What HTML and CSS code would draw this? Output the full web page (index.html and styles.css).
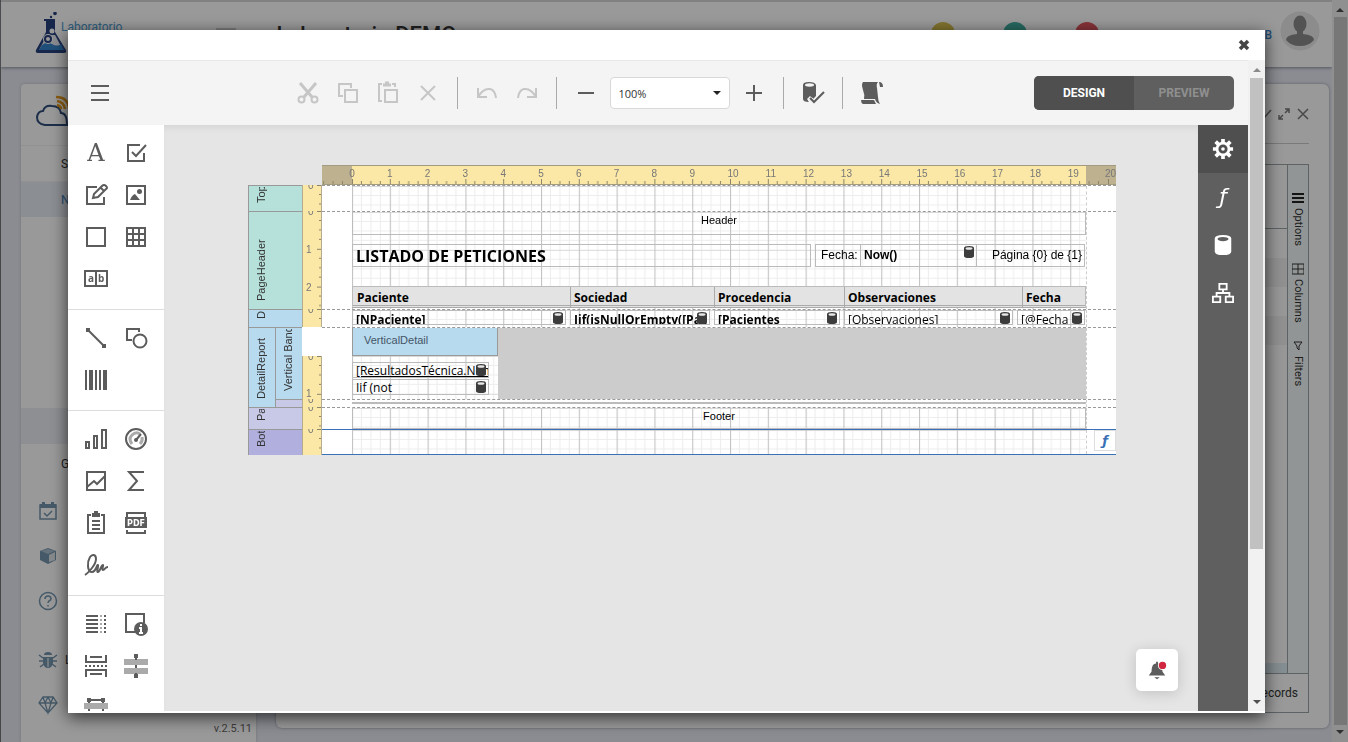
FILE: index.html
```html
<!DOCTYPE html>
<html lang="es">
<head>
<meta charset="utf-8">
<title>Laboratorio DEMO</title>
<link rel="stylesheet" href="styles.css">
</head>
<body>
<svg class="defs" aria-hidden="true">
  <defs>
    <pattern id="grid" width="378" height="378" patternUnits="userSpaceOnUse" patternTransform="scale(.1)">
      <path d="M94 0V378M189 0V378M283 0V378M0 94H378M0 189H378M0 283H378" stroke="#ededed" stroke-width="10"/>
      <path d="M0 5H378" stroke="#d8d8d8" stroke-width="10"/>
      <path d="M5 0V378" stroke="#c4c4c4" stroke-width="12"/>
    </pattern>
    <pattern id="hticks" width="378" height="200" patternUnits="userSpaceOnUse">
      <path d="M94 160V200M189 160V200M283 160V200M5 140V200" stroke="#8c8468" stroke-width="10"/>
    </pattern>
    <pattern id="vticks" width="20" height="378" patternUnits="userSpaceOnUse" patternTransform="scale(1 .1)">
      <path d="M16 94H20M16 189H20M16 283H20M14 5H20" stroke="#8c8468" stroke-width="10"/>
    </pattern>
    <symbol id="db" viewBox="0 0 12 14"><path d="M1 3Q1 1 6 1T11 3V11Q11 13 6 13T1 11Z" fill="#3c3c3c"/><ellipse cx="6" cy="3.500" rx="3.500" ry="1.300" fill="#e8e8e8"/></symbol>
    <symbol id="up" viewBox="0 0 8 4"><path d="M0 4L4 0L8 4Z"/></symbol>
    <symbol id="down" viewBox="0 0 8 4"><path d="M0 0L4 4L8 0Z"/></symbol>
  </defs>
</svg>

<div class="page">
  <div class="site">
    <header class="site-header">
      <svg class="logo" viewBox="0 0 34 44" aria-hidden="true">
        <path d="M12 8H21V20L32 38Q33 41 30 41H4Q1 41 2 38L12 20Z" fill="#27417f"/>
        <path d="M13 23L5 38H29L21 23Z" fill="#e6e9f2"/>
        <path d="M8 33Q13 29 18 32T27 32L30 38H5Z" fill="#3584c8"/>
        <circle cx="14" cy="27" r="5" fill="#fff"/><circle cx="14" cy="27" r="3" fill="none" stroke="#27417f" stroke-width="2"/>
        <circle cx="18" cy="19" r="2.500" fill="#fff"/><circle cx="21" cy="1.500" r="1.800" fill="#27417f"/><circle cx="17" cy="5" r="1.200" fill="#27417f"/>
        <path d="M10 8H21" stroke="#27417f" stroke-width="2"/>
      </svg>
      <span class="brand">Laboratorio</span>
      <span class="burger-bg"></span>
      <span class="site-title">Laboratorio DEMO</span>
      <span class="dots"><i class="dot-y"></i><i class="dot-g"></i><i class="dot-r"></i></span>
      <span class="user">LAB</span>
      <svg class="avatar" viewBox="0 0 40 40" aria-hidden="true"><circle cx="20" cy="20" r="19.500" fill="#e9e9e9"/><ellipse cx="20" cy="13" rx="6.500" ry="8.500" fill="#8b8b8b"/><path d="M17 18H23V23Q34 24 34 29Q29 35 20 35T6 29Q6 24 17 23Z" fill="#8b8b8b"/></svg>
    </header>
    <div class="site-body">
      <aside class="side">
        <svg class="cloud" viewBox="0 0 40 36" aria-hidden="true"><path d="M10 30Q2 29 2 22Q3 16 8 16Q10 10 17 11Q25 11 26 18Q32 18 32 30Z" fill="none" stroke="#2f4d7c" stroke-width="2"/><path d="M21 2Q33 2 34 14M22 6Q29 7 30 14M22 10Q26 11 26 14" fill="none" stroke="#e79a1c" stroke-width="2.500"/></svg>
        <a class="side-link" href="#s">Sistema</a>
        <a class="side-link active" href="#n">Nuevo</a>
        <span class="side-band"></span>
        <span class="side-head">Gestión</span>
        <a class="side-item" href="#cal" aria-label="Agenda"><svg viewBox="0 0 20 20"><path d="M2 4H18V18H2Z" fill="none" stroke="#7495ad" stroke-width="1.500"/><path d="M2 3H18V7H2ZM4 1H7V4H4ZM13 1H16V4H13Z" fill="#7495ad"/><path d="M6 12L9 15L14 10" fill="none" stroke="#7495ad" stroke-width="1.500"/></svg></a>
        <a class="side-item" href="#box" aria-label="Almacén"><svg viewBox="0 0 20 20"><path d="M2 5L10 2L18 5V14L10 18L2 14Z" fill="#7495ad"/><path d="M3 5L10 3L17 5L10 8Z" fill="#a9bfce"/><path d="M11 9L17 6V14L11 16Z" fill="#e0e6ea"/></svg></a>
        <a class="side-item" href="#help" aria-label="Ayuda"><svg viewBox="0 0 20 20"><circle cx="10" cy="10" r="8.500" fill="none" stroke="#7495ad" stroke-width="1.500"/><path d="M7 8Q7 5 10 5T13 8Q13 9 11 10Q10 11 10 12M10 14V15.500" fill="none" stroke="#7495ad" stroke-width="1.500"/></svg></a>
        <a class="side-item bug" href="#bug"><svg viewBox="0 0 20 20" aria-hidden="true"><path d="M6 5Q6 2 10 2T14 5ZM5 7H15V13Q14 18 10 18T5 13Z" fill="#7495ad"/><path d="M1 5L5 8M19 5L15 8M1 11H19M2 17L6 14M18 17L14 14" stroke="#7495ad" stroke-width="1.500"/><path d="M10 8V17" stroke="#fff"/></svg><span>Log</span></a>
        <a class="side-item" href="#gem" aria-label="Novedades"><svg viewBox="0 0 20 20"><path d="M5 2H15L19 8L10 18L1 8ZM1 8H19M5 2L7 8L10 18L13 8L15 2M7 8L10 2L13 8" fill="none" stroke="#7495ad" stroke-width="1.300"/></svg></a>
        <span class="version">v.2.5.11</span>
      </aside>
      <main class="panel">
        <div class="panel-tools"><svg viewBox="0 0 50 14" aria-hidden="true"><path d="M2 8L5 11L12 3M26 6L30 2M20 12L24 8M26 2H30V6M20 8V12H24M39 2L49 12M49 2L39 12" fill="none" stroke="#777" stroke-width="1.500"/></svg></div>
        <div class="grid-box">
          <div class="grid-main"><div class="grid-head"></div><div class="grid-row"></div><div class="grid-row alt"></div><div class="grid-row"></div><div class="grid-row alt"></div><div class="grid-total"></div></div>
          <div class="grid-tabs">
            <span><svg viewBox="0 0 12 12" aria-hidden="true"><path d="M0 2H12M0 6H12M0 10H12" stroke="#222" stroke-width="2"/></svg>Options</span>
            <span><svg viewBox="0 0 12 12" aria-hidden="true"><path d="M0 1H12V11H0ZM6 1V11M0 6H12" fill="none" stroke="#333"/></svg>Columns</span>
            <span><svg viewBox="0 0 12 12" aria-hidden="true"><path d="M2 2H10L7 6V10L5 8V6Z" fill="none" stroke="#333"/></svg>Filters</span>
          </div>
        </div>
        <div class="grid-foot">0 records</div>
      </main>
    </div>
  </div>
  <div class="page-scroll"><svg><use href="#up"/></svg><div class="page-thumb"></div><svg><use href="#down"/></svg></div>
</div>
<div class="shade"></div>

<section class="modal" role="dialog" aria-label="Diseñador de informes">
  <div class="modal-head"><button class="close" aria-label="Cerrar"><svg viewBox="0 0 12 12"><path d="M2 2L10 10M10 2L2 10" stroke="#444" stroke-width="3.500"/></svg></button></div>
  <div class="modal-body">
    <div class="designer">
      <div class="toolbar">
        <button class="menu" aria-label="Menú"><svg viewBox="0 0 24 24"><path d="M3 5H21M3 12H21M3 19H21" stroke="#5c5c5c" stroke-width="2"/></svg></button>
        <div class="tools">
          <button class="tool off" aria-label="Cortar"><svg viewBox="0 0 24 24"><path d="M4 2L16 16M20 2L8 16" stroke-width="3"/><circle cx="5.500" cy="18.500" r="3"/><circle cx="18.500" cy="18.500" r="3"/></svg></button>
          <button class="tool off" aria-label="Copiar"><svg viewBox="0 0 24 24"><path d="M7 15H3V3H15V7M9 9H21V21H9Z"/></svg></button>
          <button class="tool off" aria-label="Pegar"><svg viewBox="0 0 24 24"><path d="M6 20H3V3H6M16 3H19V6M9 9H21V21H9Z"/><path d="M7 4H15M9 2H13" stroke-width="3"/></svg></button>
          <button class="tool off" aria-label="Eliminar"><svg viewBox="0 0 24 24"><path d="M5 5L19 19M19 5L5 19"/></svg></button>
          <i class="sep"></i>
          <button class="tool off" aria-label="Deshacer"><svg viewBox="0 0 24 24"><path d="M3 7V16H12M3 16Q8 7 15 8Q20 9 21 17"/></svg></button>
          <button class="tool off" aria-label="Rehacer"><svg viewBox="0 0 24 24"><path d="M21 7V16H12M21 16Q16 7 9 8Q4 9 3 17"/></svg></button>
          <i class="sep"></i>
          <button class="tool" aria-label="Alejar"><svg viewBox="0 0 24 24"><path d="M4 12H20"/></svg></button>
          <label class="zoom"><select aria-label="Zoom"><option>100%</option></select><svg><use href="#down"/></svg></label>
          <button class="tool" aria-label="Acercar"><svg viewBox="0 0 24 24"><path d="M4 12H20M12 4V20"/></svg></button>
          <i class="sep"></i>
          <button class="tool" aria-label="Validar enlaces"><svg viewBox="0 0 24 24"><path d="M2 4Q2 1 8 1T15 4V15L12 18L9 15L6 18L8 21Q2 21 2 18Z" fill="#5c5c5c" stroke="none"/><ellipse cx="8.500" cy="4" rx="4.500" ry="1.700" fill="#f4f4f4" stroke="none"/><path d="M9 18L13 22L23 11" stroke="#f4f4f4" stroke-width="5"/><path d="M9 17L13 21L23 11"/></svg></button>
          <i class="sep"></i>
          <button class="tool" aria-label="Scripts"><svg viewBox="0 0 24 24"><path d="M3 1H18Q16 3 17 7L18 16Q18 20 20 23Q16 22 15 18H4Q5 14 3 9Q1 3 3 1ZM1 19H14L16 23H3Q1 22 1 19ZM19 1Q23 1 23 6H20Z" fill="#5c5c5c" stroke="none"/></svg></button>
        </div>
        <div class="toggle"><button class="on">DESIGN</button><button>PREVIEW</button></div>
      </div>
      <div class="work">
        <nav class="toolbox">
          <div class="group">
            <button aria-label="Etiqueta"><span class="letter">A</span></button>
            <button aria-label="Casilla"><svg viewBox="0 0 24 24"><path d="M16 4H4V20H20V12M8 11L12 15L22 4"/></svg></button>
            <button aria-label="Texto enriquecido"><svg viewBox="0 0 24 24"><path d="M13 4H3V21H20V14M9 15L10 11L18 3Q20 1 22 3T22 6L14 14ZM17 5L20 8"/></svg></button>
            <button aria-label="Imagen"><svg viewBox="0 0 24 24"><path d="M3 3H21V21H3Z"/><path d="M6 17Q8 12 11 11L16 17Z" fill="#5c5c5c" stroke="none"/><circle cx="15.500" cy="8.500" r="2.500" fill="#5c5c5c" stroke="none"/></svg></button>
            <button aria-label="Panel"><svg viewBox="0 0 24 24"><path d="M3 3H21V21H3Z"/></svg></button>
            <button aria-label="Tabla"><svg viewBox="0 0 24 24"><path d="M3 3H21V21H3ZM9 3V21M15 3V21M3 9H21M3 15H21"/></svg></button>
            <button aria-label="Peine de caracteres"><svg viewBox="0 0 24 24"><path d="M1 4H23V19H1ZM12 4V19"/><text x="4" y="15" class="glyph-ab">a</text><text x="14" y="15" class="glyph-ab">b</text></svg></button>
          </div>
          <div class="group">
            <button aria-label="Línea"><svg viewBox="0 0 24 24"><path d="M4 4L20 20"/><path d="M2 2H6V6H2ZM18 18H22V22H18Z" fill="#5c5c5c" stroke="none"/></svg></button>
            <button aria-label="Forma"><svg viewBox="0 0 24 24"><path d="M8 14H3V3H15V6"/><circle cx="16" cy="15" r="6.500"/></svg></button>
            <button aria-label="Código de barras"><svg viewBox="0 0 24 24"><path d="M2 2V22M12 2V22M16 2V22" stroke-width="2"/><path d="M7 2V22M21 2V22" stroke-width="4"/></svg></button>
          </div>
          <div class="group">
            <button aria-label="Gráfico"><svg viewBox="0 0 24 24"><path d="M2 15H5V21H2ZM10 9H13V21H10ZM18 3H22V21H18Z"/></svg></button>
            <button aria-label="Medidor"><svg viewBox="0 0 24 24"><circle cx="12" cy="12" r="10"/><path d="M8 17Q4 12 8 8T16 7M18 10Q19 14 16 17" stroke="#aaa" stroke-width="3"/><path d="M12 13L17 7" stroke-width="2"/><circle cx="12" cy="13" r="2" fill="#5c5c5c" stroke="none"/></svg></button>
            <button aria-label="Minigráfico"><svg viewBox="0 0 24 24"><path d="M3 3H21V21H3ZM3 18L10 12L13 15L21 7"/></svg></button>
            <button aria-label="Tabla dinámica"><svg viewBox="0 0 24 24"><path d="M20 3H5L13 12L5 21H20"/></svg></button>
            <button aria-label="Subinforme"><svg viewBox="0 0 24 24"><path d="M7 4H4V22H20V4H17M8 10H16M8 14H16M8 18H16"/><path d="M8 2H10V0H14V2H16V6H8Z" fill="#5c5c5c" stroke="none"/></svg></button>
            <button aria-label="PDF"><svg viewBox="0 0 24 24"><path d="M3 6V2H21V6M3 19V22H21V19"/><path d="M1 6H23V17H1Z" fill="#5c5c5c" stroke="none"/><text x="12" y="15" class="glyph-pdf">PDF</text></svg></button>
            <button aria-label="Firma"><svg viewBox="0 0 24 24"><path d="M1 22C4 20 12 12 12 6C12 1 8 1 6 4C3 9 3 19 8 19C12 19 13 11 14 12C15 13 12 19 14 19C16 19 17 12 19 12C20 13 17 16 19 17C21 17 21 14 24 14"/></svg></button>
          </div>
          <div class="group">
            <button aria-label="Tabla de contenido"><svg viewBox="0 0 24 24"><path d="M2 4H14M2 8H14M2 12H14M2 16H14M2 20H14"/><path d="M21 3V21" stroke-dasharray="2 2"/><path d="M17 3V21" stroke="#aaa" stroke-dasharray="2 2"/></svg></button>
            <button aria-label="Información de página"><svg viewBox="0 0 24 24"><path d="M11 20H2V2H20V11"/><circle cx="17" cy="17" r="7" fill="#5c5c5c" stroke="none"/><path d="M17 12V14M15 16H17V21M15 21H19" stroke="#fff"/></svg></button>
            <button aria-label="Salto de página"><svg viewBox="0 0 24 24"><path d="M2 1V8H22V1M6 3H18M2 23V16H22V23M6 20H18"/><path d="M1 12H23" stroke-dasharray="2 2"/></svg></button>
            <button aria-label="Línea entre bandas"><svg viewBox="0 0 24 24"><path d="M0 5H24V11H0ZM0 14H24V20H0Z" fill="#aaa" stroke="none"/><path d="M12 3V6M12 11V14M12 19V22"/><path d="M10 0H14V4H10ZM10 20H14V24H10Z" fill="#5c5c5c" stroke="none"/></svg></button>
            <button aria-label="Cuadro entre bandas"><svg viewBox="0 0 24 24"><path d="M5 4V23H19V4Z"/><path d="M0 7H24V13H0ZM0 15H24V21H0Z" fill="#aaa" stroke="none"/><path d="M3 2H7V6H3ZM17 2H21V6H17Z" fill="#5c5c5c" stroke="none"/></svg></button>
          </div>
        </nav>

        <div class="canvas">
          <div class="surface">
            <svg class="hruler" viewBox="-300 0 7940 200">
              <rect x="-300" width="7940" height="200" fill="#fbe8a7"/>
              <rect x="-300" width="300" height="200" fill="#bdb190"/><rect x="7340" width="300" height="200" fill="#bdb190"/>
              <rect x="-300" width="7940" height="200" fill="url(#hticks)"/>
              <path d="M-300 5H7640M-300 195H7640" stroke="#a39b80" stroke-width="10"/>
              <g class="hnum"><text x="0" y="120">0</text><text x="378" y="120">1</text><text x="756" y="120">2</text><text x="1134" y="120">3</text><text x="1512" y="120">4</text><text x="1890" y="120">5</text><text x="2268" y="120">6</text><text x="2646" y="120">7</text><text x="3024" y="120">8</text><text x="3402" y="120">9</text><text x="3810" y="120">10</text><text x="4188" y="120">11</text><text x="4566" y="120">12</text><text x="4944" y="120">13</text><text x="5322" y="120">14</text><text x="5700" y="120">15</text><text x="6078" y="120">16</text><text x="6456" y="120">17</text><text x="6834" y="120">18</text><text x="7212" y="120">19</text><text x="7585" y="120">20</text></g>
            </svg>

            <div class="band h-margin">
              <div class="tag teal"><span>TopMargin</span></div>
              <svg class="vruler"><rect width="20" height="100%" fill="url(#vticks)"/><text x="5" y="4">0</text></svg>
              <div class="sheet"><svg class="lines"><rect width="734" height="100%" fill="url(#grid)"/></svg></div>
            </div>

            <div class="band h-header">
              <div class="tag teal"><span>PageHeader</span></div>
              <svg class="vruler"><rect width="20" height="100%" fill="url(#vticks)"/><text x="5" y="4">0</text><text x="3" y="42">1</text><text x="3" y="80">2</text></svg>
              <div class="sheet"><svg class="lines"><rect width="734" height="100%" fill="url(#grid)"/></svg>
                <div class="item c-head">Header</div>
                <div class="item c-title">LISTADO DE PETICIONES</div>
                <div class="item c-fecha">Fecha:</div>
                <div class="item c-now">Now()<svg class="db"><use href="#db"/></svg></div>
                <div class="item c-pag">Página {0} de {1}</div>
                <div class="trow"><span>Paciente</span><span>Sociedad</span><span>Procedencia</span><span>Observaciones</span><span>Fecha</span></div>
              </div>
            </div>

            <div class="band h-detail">
              <div class="tag blue"><span>Detail</span></div>
              <svg class="vruler"><rect width="20" height="100%" fill="url(#vticks)"/><text x="5" y="4">0</text></svg>
              <div class="sheet"><svg class="lines"><rect width="734" height="100%" fill="url(#grid)"/></svg>
                <div class="drow">
                  <div class="cell strong">[NPaciente]<svg class="db"><use href="#db"/></svg></div>
                  <div class="cell strong">Iif(isNullOrEmpty([Pac<svg class="db"><use href="#db"/></svg></div>
                  <div class="cell strong">[Pacientes<svg class="db"><use href="#db"/></svg></div>
                  <div class="cell">[Observaciones]<svg class="db"><use href="#db"/></svg></div>
                  <div class="cell">[@Fecha<svg class="db"><use href="#db"/></svg></div>
                </div>
              </div>
            </div>

            <div class="nested">
              <div class="tag blue"><span>DetailReport</span></div>
              <div class="nest-rows">
                <div class="vband">
                  <div class="tag blue"><span>Vertical Bands</span></div>
                  <div class="vruler-gap"><svg class="vruler"><rect width="20" height="100%" fill="url(#vticks)"/><text x="5" y="4">0</text><text x="3" y="41">1</text></svg></div>
                  <div class="sheet vsheet">
                    <div class="vcol">
                      <div class="vtitle">VerticalDetail</div>
                      <div class="vbody"><svg class="lines vgrid"><rect width="146" height="100%" fill="url(#grid)"/></svg>
                        <div class="cell under">[ResultadosTécnica.Nom<svg class="db"><use href="#db"/></svg></div>
                        <div class="cell">Iif (not<svg class="db"><use href="#db"/></svg></div>
                      </div>
                    </div>
                    <div class="vrest"></div>
                  </div>
                </div>
                <div class="band h-sub">
                  <div class="tag lilac"></div>
                  <svg class="vruler"><text x="5" y="4">0</text></svg>
                  <div class="sheet"><div class="rule"></div></div>
                </div>
              </div>
            </div>

            <div class="band h-footer">
              <div class="tag lilac"><span>PageFooter</span></div>
              <svg class="vruler"><rect width="20" height="100%" fill="url(#vticks)"/><text x="5" y="4">0</text></svg>
              <div class="sheet"><svg class="lines"><rect width="734" height="100%" fill="url(#grid)"/></svg><div class="item c-foot">Footer</div></div>
            </div>

            <div class="band h-margin">
              <div class="tag violet"><span>BottomMargin</span></div>
              <svg class="vruler"><rect width="20" height="100%" fill="url(#vticks)"/><text x="5" y="4">0</text></svg>
              <div class="sheet picked"><svg class="lines"><rect width="734" height="100%" fill="url(#grid)"/></svg><button class="fx" aria-label="Expresión">ƒ</button></div>
            </div>
          </div>
          <button class="bell" aria-label="Avisos"><svg viewBox="0 0 24 24"><path d="M3 18L6 14Q6 5 11 5V3H13V5Q18 5 18 14L21 18ZM9 20H15L12 22Z" fill="#5c5c5c"/><circle cx="18" cy="7" r="5" fill="#fff"/><circle cx="18" cy="7" r="4" fill="#d0263f"/></svg></button>
        </div>

        <nav class="tabs">
          <button class="on" aria-label="Propiedades"><svg viewBox="0 0 24 24"><circle cx="12" cy="12" r="6.500" fill="none" stroke="#fff" stroke-width="3"/><circle cx="12" cy="12" r="2" fill="#fff"/><path d="M12 1V5M12 19V23M1 12H5M19 12H23M4 4L7 7M17 17L20 20M20 4L17 7M4 20L7 17" stroke="#fff" stroke-width="4"/></svg></button>
          <button aria-label="Expresiones"><span class="letter-f">ƒ</span></button>
          <button aria-label="Campos"><svg viewBox="0 0 24 24"><path d="M3 5Q3 1 12 1T21 5V19Q21 23 12 23T3 19Z" fill="#fff"/><ellipse cx="12" cy="5.500" rx="6" ry="2.300" fill="#5f5f5f"/></svg></button>
          <button aria-label="Explorador"><svg viewBox="0 0 24 24"><path d="M8 2H16V8H8ZM1 16H9V22H1ZM15 16H23V22H15ZM12 8V12M5 16V12H19V16" fill="none" stroke="#fff" stroke-width="2"/></svg></button>
        </nav>
      </div>
    </div>
    <div class="inner-scroll"><svg class="up"><use href="#up"/></svg><div class="inner-thumb"></div><svg><use href="#down"/></svg></div>
  </div>
</section>
</body>
</html>
```
FILE: styles.css
```css
* { box-sizing: border-box; }
body { margin: 0; height: 100vh; overflow: hidden; font-family: Roboto, "Liberation Sans", sans-serif; font-size: 12px; color: #333; }
button { border: 0; padding: 0; background: none; font: inherit; color: inherit; }
a { color: inherit; text-decoration: none; }
svg { display: block; }
.defs { position: absolute; width: 0; height: 0; }

/* Page behind the dialog */
.page { display: flex; height: 100vh; }
.site { flex: 1; display: flex; flex-direction: column; min-width: 0; background: #e6e9f2; border-left: 1px solid #777; }
.site-header { display: flex; align-items: flex-start; height: 67px; padding-left: 33px; background: #fff; border-top: 2px solid #d8d8d8; box-shadow: 0 1px 3px #8a8f9c; }
.logo { width: 34px; height: 44px; margin-top: 10px; }
.brand { margin: 18px 0 0 -7px; font-size: 12px; color: #4d9bd0; }
.burger-bg { width: 20px; height: 3px; margin: 26px 0 0 94px; background: #ccc; }
.site-title { margin: 20px 0 0 40px; font-size: 22px; font-weight: 500; color: #333; }
.dots { flex: 1; display: flex; justify-content: flex-end; gap: 48px; margin: 20px 151px 0 0; }
.dots i { width: 24px; height: 24px; border-radius: 50%; }
.dot-y { background: #d8c04e; }
.dot-g { background: #3fae9f; }
.dot-r { background: #e0565f; }
.user { margin: 26px 8px 0 0; font-size: 12px; font-weight: 500; color: #3a7fc4; }
.avatar { width: 40px; height: 40px; margin: 9px 12px 0 0; }
.site-body { flex: 1; display: flex; gap: 20px; padding: 17px 3px 0 20px; min-height: 0; }
.side { display: flex; flex-direction: column; width: 235px; background: #fff; border-radius: 4px 4px 0 0; box-shadow: 0 0 3px #b8bcc8; overflow: hidden; }
.cloud { width: 40px; height: 36px; margin: 11px 0 14px 14px; }
.side-link { height: 36px; padding-left: 40px; line-height: 36px; border-top: 1px solid #f2f2f2; }
.side-link.active { color: #3d7fc0; background: #e8edf4; }
.side-band { height: 36px; margin-top: 191px; background: #eceff5; }
.side-head { height: 44px; padding: 10px 0 0 40px; line-height: 20px; }
.side-item { display: flex; align-items: center; gap: 7px; height: 45px; padding-left: 17px; }
.side-item svg { width: 20px; height: 20px; }
.side-item.bug { margin-top: 14px; }
.version { margin: -8px 4px 0 0; text-align: right; line-height: 20px; color: #666; font-size: 11px; }
.panel { flex: 1; display: flex; flex-direction: column; margin-bottom: 14px; padding: 0 20px 15px; background: #fff; border-radius: 6px; box-shadow: 0 0 3px #9297a6; }
.panel-tools { display: flex; justify-content: flex-end; align-items: center; height: 60px; border-bottom: 1px solid #ccc; }
.panel-tools svg { width: 50px; height: 14px; }
.grid-box { flex: 1; display: flex; margin-top: 20px; border: 1px solid #9ba4a8; }
.grid-main { flex: 1; display: flex; flex-direction: column; background: #fcfcfc; }
.grid-head { height: 64px; border-bottom: 1px solid #9ba4a8; }
.grid-row { height: 29px; }
.grid-row.alt { background: #f0f0f0; }
.grid-total { height: 10px; margin-top: auto; background: #dcebf2; }
.grid-tabs { display: flex; flex-direction: column; align-items: center; gap: 17px; width: 21px; padding-top: 27px; background: #f4f9f9; border-left: 1px solid #9ba4a8; }
.grid-tabs span { display: flex; align-items: center; gap: 4px; writing-mode: vertical-rl; font-size: 11px; }
.grid-tabs svg { width: 12px; height: 12px; }
.grid-foot { height: 39px; padding-right: 10px; text-align: right; line-height: 39px; border: 1px solid #9ba4a8; border-top: 0; }
.page-scroll { display: flex; flex-direction: column; align-items: center; gap: 5px; width: 16px; padding: 8px 0; background: #f1f1f1; }
.page-scroll svg { width: 8px; height: 4px; fill: #505050; }
.page-thumb { flex: 1; width: 13px; background: #c6c6c6; }
.shade { position: fixed; inset: 0; background: rgba(0, 0, 0, .4); }

/* Dialog */
.modal { position: fixed; inset: 30px 83px 29px 68px; display: flex; flex-direction: column; padding-bottom: 2px; background: #fff; box-shadow: 0 4px 16px rgba(0, 0, 0, .7); }
.modal-head { display: flex; justify-content: flex-end; align-items: center; height: 30px; padding-right: 15px; }
.close svg { width: 12px; height: 12px; }
.modal-body { flex: 1; display: flex; min-height: 0; }
.designer { flex: 1; display: flex; flex-direction: column; min-width: 0; }
.toolbar { display: flex; align-items: center; height: 65px; padding: 0 14px 0 20px; background: #f4f4f4; border-top: 1px solid #e8e8e8; }
.menu svg { width: 24px; height: 24px; }
.tools { flex: 1; display: flex; justify-content: center; align-items: center; padding-left: 33px; }
.tool { display: flex; justify-content: center; align-items: center; width: 40px; height: 40px; }
.tool svg { width: 24px; height: 24px; fill: none; stroke: #5c5c5c; stroke-width: 2; }
.tool.off svg { stroke: #c6c6c6; }
.sep { width: 1px; height: 32px; margin: 0 9px; background: #aaa; }
.zoom { position: relative; width: 120px; height: 32px; margin: 0 4px; }
.zoom select { appearance: none; width: 100%; height: 100%; padding: 0 8px; border: 1px solid #d8d8d8; border-radius: 4px; background: #fff; font: 11px "Open Sans", sans-serif; color: #333; }
.zoom svg { position: absolute; right: 9px; top: 14px; width: 8px; height: 4px; fill: #222; }
.toggle { display: flex; width: 200px; height: 34px; border-radius: 5px; overflow: hidden; background: #5f5f5f; color: #8f8f8f; font-weight: 700; }
.toggle button { flex: 1; }
.toggle .on { background: #4f4f4f; color: #fff; }
.work { flex: 1; display: flex; min-height: 0; }

/* Toolbox */
.toolbox { width: 96px; overflow: hidden; background: #fff; }
.group { display: grid; grid-template-columns: 40px 40px; grid-auto-rows: 42px; padding: 7px 8px 9px; border-bottom: 1px solid #ddd; }
.group button { display: flex; justify-content: center; align-items: center; }
.group svg { width: 24px; height: 24px; fill: none; stroke: #5c5c5c; stroke-width: 2; overflow: visible; }
.letter { font: 24px/24px "DejaVu Serif", serif; color: #5c5c5c; }
.group .glyph-ab { font: 700 10px "Open Sans", sans-serif; fill: #5c5c5c; stroke: none; }
.group .glyph-pdf { font: 700 8px "DejaVu Sans", sans-serif; fill: #fff; stroke: none; text-anchor: middle; }

/* Right tabs */
.tabs { display: flex; flex-direction: column; width: 50px; background: #5f5f5f; }
.tabs button { display: flex; justify-content: center; align-items: center; height: 48px; }
.tabs .on { background: #4f4f4f; }
.tabs svg { width: 22px; height: 22px; }
.letter-f { font: italic 22px/24px "DejaVu Sans", sans-serif; color: #fff; }

/* Inner scrollbar */
.inner-scroll { display: flex; flex-direction: column; align-items: center; width: 17px; padding: 8px 0 7px; background: #f1f1f1; }
.inner-scroll svg { width: 8px; height: 4px; fill: #505050; }
.inner-scroll .up { fill: #8a8a8a; }
.inner-thumb { flex: 0 0 74%; width: 13px; margin: 6px 0 auto; background: #c1c1c1; }

/* Report surface */
.canvas { position: relative; flex: 1; padding: 40px 82px 0 84px; overflow: hidden; background: #e5e5e5; box-shadow: inset 0 6px 10px -6px rgba(0, 0, 0, .12); }
.bell { position: absolute; right: 20px; bottom: 20px; display: flex; justify-content: center; align-items: center; width: 42px; height: 42px; border-radius: 5px; background: #fff; box-shadow: 0 2px 14px rgba(0, 0, 0, .16); }
.bell svg { width: 22px; height: 22px; }
.surface { width: 868px; font-family: "Liberation Sans", Arial, sans-serif; font-size: 11px; color: #000; }
.hruler { width: 794px; height: 20px; margin-left: 74px; }
.hnum { font-size: 100px; fill: #777; text-anchor: middle; }
.band { display: grid; grid-template: minmax(0, 1fr) / 54px 20px 794px; }
.h-margin { height: 26px; }
.h-header { height: 98px; }
.h-detail { height: 18px; }
.h-footer { height: 22px; }
.tag { display: flex; align-items: flex-start; min-height: 0; padding: 1px 0 8px 6px; border: 1px solid #999; border-width: 1px 0 0 1px; overflow: hidden; color: #333; }
.tag span { height: 100%; writing-mode: vertical-rl; transform: rotate(180deg); white-space: nowrap; line-height: 13px; overflow: hidden; }
.teal { background: #b6e1da; }
.blue { background: #b7daee; }
.lilac { background: #c7c9e6; }
.violet { background: #b0afdd; }
.vruler { width: 20px; height: 100%; background: #fbe8a7; border-left: 1px solid #b5ac90; border-right: 1px solid #b5ac90; font-size: 10px; fill: #777; }
.sheet { position: relative; padding-left: 30px; background: #fff; border-top: 1px dashed #999; }
.sheet::after { content: ""; position: absolute; top: 0; bottom: 0; right: 29px; border-right: 1px dashed #ccc; }
.lines { width: 734px; height: 100%; }
.item { position: absolute; border: 1px solid #bbb; white-space: nowrap; font-size: 12px; line-height: 21px; }
.c-head, .c-foot { left: 30px; top: -1px; width: 734px; height: 24px; border-top: 0; font-size: 11px; line-height: 18px; text-align: center; }
.c-foot { height: 22px; }
.c-title { left: 30px; top: 32px; width: 459px; height: 23px; padding-left: 3px; font: 700 16px/22px "Open Sans", sans-serif; }
.c-fecha { left: 493px; top: 32px; width: 46px; height: 23px; padding-left: 5px; }
.c-now { left: 538px; top: 32px; width: 117px; height: 23px; padding-left: 3px; font-weight: 700; }
.c-pag { left: 654px; top: 32px; width: 109px; height: 23px; padding-right: 2px; text-align: right; }
.db { position: absolute; right: 1px; top: 0; width: 12px; height: 14px; }
.trow { position: absolute; left: 30px; bottom: 1px; display: grid; grid-template-columns: 217px 144px 130px 178px 63px; height: 22px; background: #e3e3e3; border: 1px solid #bbb; border-bottom: 3px double #aaa; font: 700 12px/21px "Open Sans", sans-serif; }
.trow span { padding-left: 3px; border-left: 1px solid #aaa; }
.trow span:first-child { border-left: 0; padding-left: 4px; }
.drow { position: absolute; left: 30px; top: 0; display: grid; grid-template-columns: 214px 140px 126px 169px 68px; column-gap: 4px; }
.cell { position: relative; height: 15px; padding-left: 3px; border: 1px solid #bbb; overflow: hidden; white-space: nowrap; font: 12px/17px "Open Sans", sans-serif; }
.strong { font-weight: 700; }
.nested { display: grid; grid-template: 80px / 27px 841px; }
.nest-rows { display: grid; grid-template-rows: 72px 8px; }
.vband, .nested .h-sub { display: grid; grid-template: minmax(0, 1fr) / 27px 20px 794px; min-height: 0; }
.vruler-gap { height: 72px; padding-top: 29px; background: #fff; }
.h-sub .tag { padding: 0; }
.vsheet { display: flex; }
.vcol { width: 146px; }
.vtitle { height: 28px; padding-left: 11px; border: 1px solid #999; border-top: 0; background: #b7daee; line-height: 25px; color: #456; }
.vbody { position: relative; display: flex; flex-direction: column; gap: 1px; height: 43px; padding-top: 6px; }
.vgrid { position: absolute; top: 0; left: 0; width: 146px; height: 43px; }
.vbody .cell { width: 137px; height: 16px; line-height: 16px; }
.under { text-decoration: underline; text-underline-offset: 1px; }
.vrest { width: 588px; background: #ccc; }
.rule { width: 734px; height: 3px; margin-top: 2px; border-top: 2px solid #bbb; }
.picked { border-top: 1px solid #3a70b5; border-bottom: 1px solid #3a70b5; }
.fx { position: absolute; right: 0; top: 0; width: 22px; height: 21px; border: 1px solid #ddd; background: #fff; color: #3a70b5; font: italic 700 13px "DejaVu Sans", sans-serif; }
```
